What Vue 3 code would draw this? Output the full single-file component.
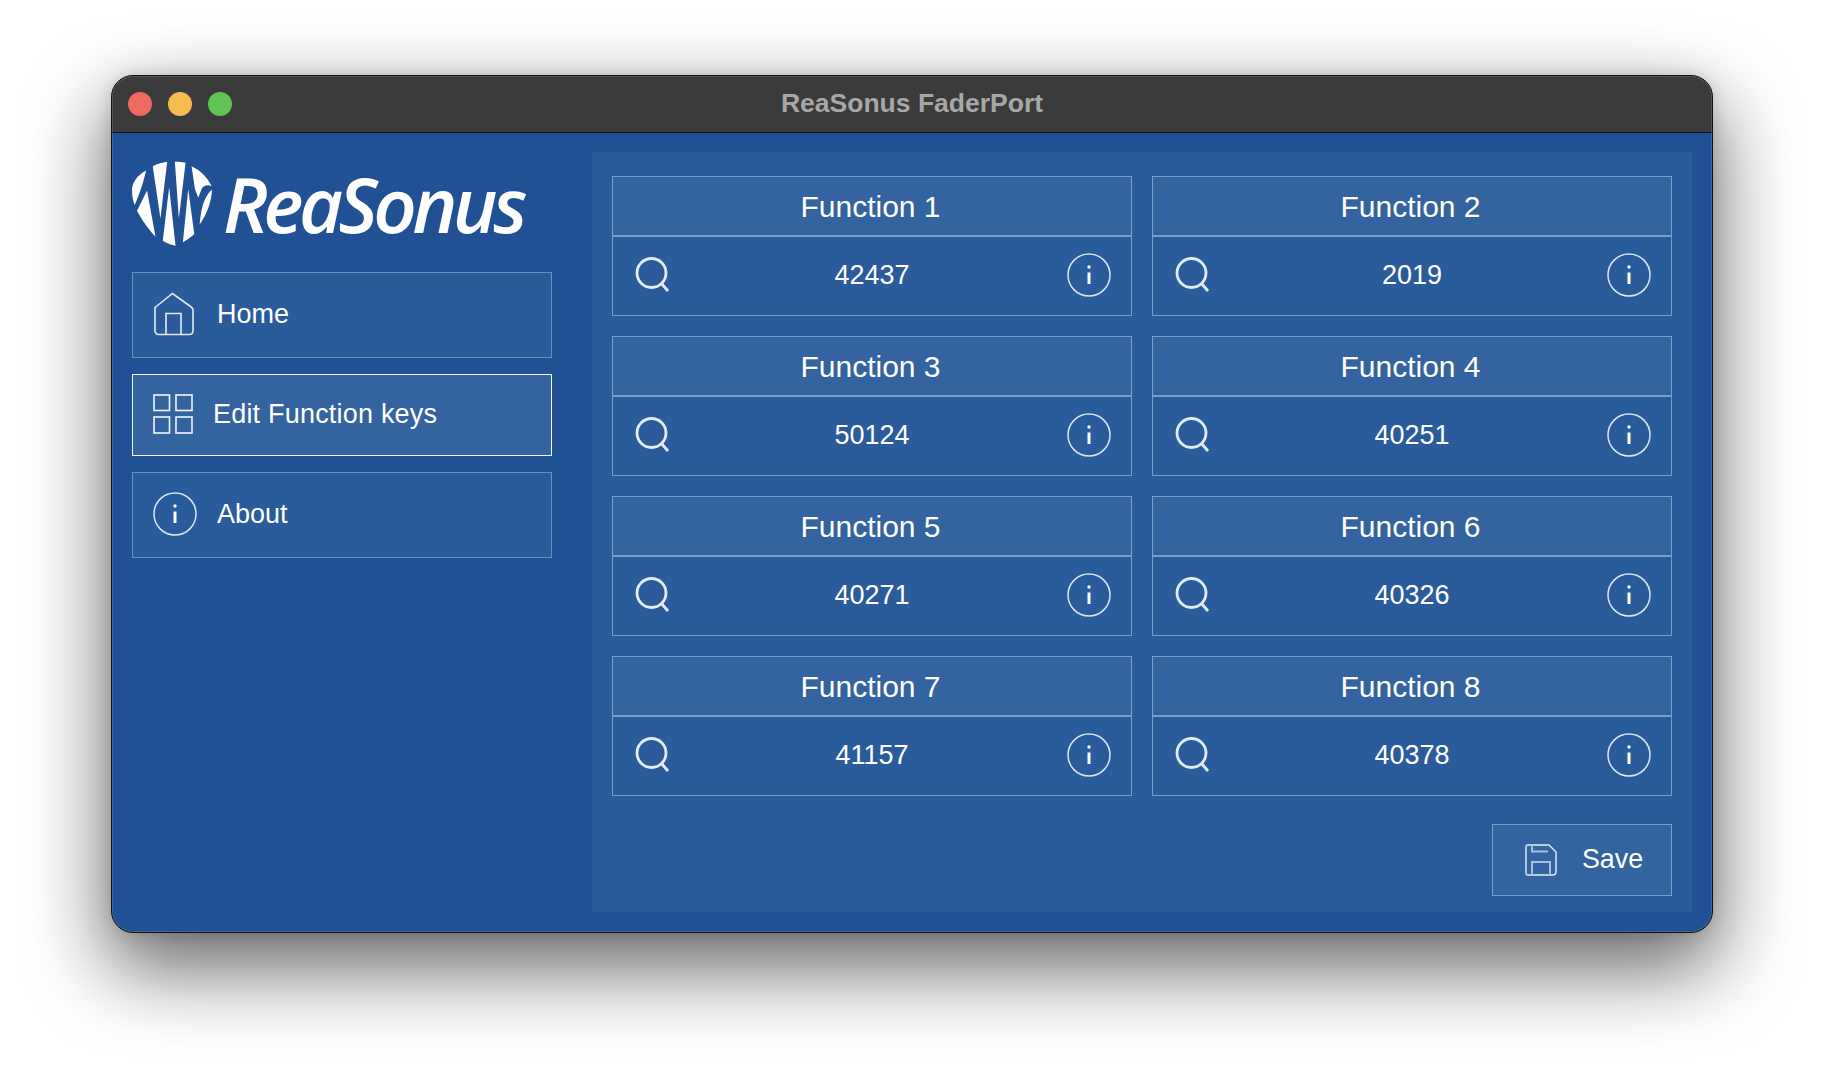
<script setup>
const functions = [
  { id: 1, value: '42437' },
  { id: 2, value: '2019' },
  { id: 3, value: '50124' },
  { id: 4, value: '40251' },
  { id: 5, value: '40271' },
  { id: 6, value: '40326' },
  { id: 7, value: '41157' },
  { id: 8, value: '40378' },
];
</script>

<template>
  <div class="page">
    <div class="window">
      <header class="titlebar">
        <div class="lights">
          <span class="light red"></span>
          <span class="light yellow"></span>
          <span class="light green"></span>
        </div>
        <div class="title">ReaSonus FaderPort</div>
      </header>

      <div class="body">
        <aside class="sidebar">
          <div class="logo">
            <svg class="logo-mark" viewBox="20 17 242 256" fill="#fff">
              <path d="M62 45C38 58 22 78 20 100C20 120 23 135 28 148C38 125 52 90 62 45Z" />
              <path d="M65 105L35 165C48 190 68 220 90 242Z" />
              <path d="M82 32C96 25 112 21 125 19L105 188Z" />
              <path d="M131 95L112 255C124 263 138 268 150 270Z" />
              <path d="M148 19C160 19 170 20 180 22L160 188Z" />
              <path d="M188 100L172 260C184 253 195 245 206 235Z" />
              <path d="M198 32C224 44 246 66 258 92C245 86 234 90 228 100L218 126L208 100Z" />
              <path d="M259 102C258 135 244 178 222 206C226 170 230 128 259 102Z" />
            </svg>
            <span class="logo-text">ReaSonus</span>
          </div>

          <nav class="nav">
            <button class="nav-btn">
              <svg class="icon-44" viewBox="0 0 44 44" fill="none" stroke="#e4ebf4" stroke-width="1.6">
                <path d="M2 15.500L19.500 1.500L37.500 14.500C39.200 15.700 40 16.500 40 18V38.500C40 41 38.500 42.500 36 42.500H6C3.500 42.500 2 41 2 38.500Z" />
                <path d="M13 42.500V21.500H28V42.500" />
              </svg>
              <span>Home</span>
            </button>
            <button class="nav-btn active">
              <svg class="icon-40" viewBox="0 0 40 40" fill="none" stroke="#f2f5fa" stroke-width="1.6">
                <rect x="1" y="1" width="15.500" height="15.500" />
                <rect x="23" y="1" width="16" height="15.500" />
                <rect x="1" y="23" width="15.500" height="16" />
                <rect x="23" y="23" width="16" height="16" />
              </svg>
              <span>Edit Function keys</span>
            </button>
            <button class="nav-btn">
              <svg class="icon-44" viewBox="0 0 44 44" fill="none" stroke="#dfe7f1" stroke-width="1.5">
                <circle cx="22" cy="22" r="21" />
                <path d="M22 19.500V31" stroke="#fff" stroke-width="3" />
                <circle cx="22" cy="14" r="1.700" fill="#fff" stroke="none" />
              </svg>
              <span>About</span>
            </button>
          </nav>
        </aside>

        <main class="panel">
          <div class="grid">
            <section v-for="fn in functions" :key="fn.id" class="card">
              <h2 class="card-title">Function {{ fn.id }}</h2>
              <div class="card-row">
                <svg class="icon-44" viewBox="0 0 44 44" fill="none" stroke="#e4ebf4">
                  <circle cx="18.500" cy="20" r="14.500" stroke-width="2.800" />
                  <path d="M28.500 30.500L35 38" stroke-width="2.800" />
                </svg>
                <span class="value">{{ fn.value }}</span>
                <svg class="icon-44" viewBox="0 0 44 44" fill="none" stroke="#dfe7f1" stroke-width="1.5">
                  <circle cx="22" cy="22" r="21" />
                  <path d="M22 19.500V31" stroke="#fff" stroke-width="3" />
                  <circle cx="22" cy="14" r="1.700" fill="#fff" stroke="none" />
                </svg>
              </div>
            </section>
          </div>

          <div class="actions">
            <button class="save-btn">
              <svg class="icon-32" viewBox="0 0 32 32" fill="none" stroke="#e4ebf4" stroke-width="1.400">
                <path d="M3 1H24L31 8V28C31 30 30 31 28 31H3C1.500 31 1 30 1 28.500V3.500C1 2 1.500 1 3 1Z" />
                <path d="M7 1V7.500H23" stroke="#a9c0dc" stroke-width="2" />
                <path d="M7 31V18H25V31" stroke="#a9c0dc" stroke-width="2" />
              </svg>
              <span>Save</span>
            </button>
          </div>
        </main>
      </div>
    </div>
  </div>
</template>

<style>
html,
body {
  margin: 0;
  background: #fff;
}
</style>

<style scoped>
.page {
  width: 1824px;
  height: 1080px;
  padding: 75px 0 0 111px;
  box-sizing: border-box;
  overflow: hidden;
  font-family: 'Liberation Sans', Arial, sans-serif;
  color: #fff;
}

.window {
  width: 1602px;
  height: 858px;
  box-sizing: border-box;
  border: 1px solid #111;
  border-radius: 22px;
  overflow: hidden;
  background: #215195;
  box-shadow: 0 32px 80px 4px rgba(0, 0, 0, 0.6), 0 0 16px rgba(0, 0, 0, 0.14);
  display: flex;
  flex-direction: column;
  position: relative;
}

/* thin light rim round the whole window */
.window::after {
  content: '';
  position: absolute;
  inset: 0;
  border-radius: 21px;
  box-shadow: inset 0 0 0 1px rgba(255, 255, 255, 0.14);
  pointer-events: none;
}

.titlebar {
  height: 56px;
  flex-shrink: 0;
  background: #3a3b3a;
  border-bottom: 1px solid #0c0c0c;
  display: flex;
  align-items: center;
  justify-content: center;
  position: relative;
}

.lights {
  position: absolute;
  left: 16px;
  top: 16px;
  display: flex;
  gap: 16px;
}

.light {
  width: 24px;
  height: 24px;
  border-radius: 50%;
}

.red {
  background: #ee6a5f;
}

.yellow {
  background: #f5bd4f;
}

.green {
  background: #61c454;
}

.title {
  font-size: 26.500px;
  font-weight: 700;
  color: #a6a7a6;
  padding-bottom: 2px;
}

.body {
  flex: 1;
  display: flex;
  padding: 19px 20px 20px;
  gap: 40px;
  min-height: 0;
}

.sidebar {
  width: 420px;
  flex-shrink: 0;
}

.logo {
  height: 120px;
  display: flex;
  align-items: flex-start;
  gap: 10px;
  padding-top: 9px;
  box-sizing: border-box;
}

.logo-mark {
  width: 81px;
  height: 86px;
  flex-shrink: 0;
}

.logo-text {
  font-family: 'Open Sans', sans-serif;
  font-style: italic;
  font-weight: 600;
  font-size: 76px;
  line-height: 86px;
  letter-spacing: -4.500px;
  color: #fff;
}

.nav {
  display: flex;
  flex-direction: column;
  gap: 16px;
}

button {
  font-family: inherit;
  color: #fff;
  cursor: pointer;
}

.nav-btn {
  height: 86px;
  box-sizing: border-box;
  background: #2a5b9b;
  border: 1px solid #6e8fbb;
  display: flex;
  align-items: center;
  gap: 20px;
  padding: 0 0 2px 20px;
  font-size: 27px;
}

.nav-btn.active {
  height: 82px;
  background: #33649f;
  border: 1.500px solid #f4f6fa;
  letter-spacing: 0.2px;
}

.icon-44 {
  width: 44px;
  height: 44px;
  flex-shrink: 0;
}

.icon-40 {
  width: 40px;
  height: 40px;
  flex-shrink: 0;
}

.icon-32 {
  width: 32px;
  height: 32px;
  flex-shrink: 0;
}

.panel {
  width: 1100px;
  height: 760px;
  box-sizing: border-box;
  background: #2a5b9b;
  padding: 24px 20px 16px;
  display: flex;
  flex-direction: column;
}

.grid {
  display: grid;
  grid-template-columns: 520px 520px;
  gap: 20px;
}

.card {
  height: 140px;
  box-sizing: border-box;
  border: 1px solid #7d9bc3;
  display: flex;
  flex-direction: column;
}

.card-title {
  margin: 0;
  height: 60px;
  box-sizing: border-box;
  background: #33649f;
  border-bottom: 2px solid #7d9bc3;
  font-size: 30px;
  font-weight: 400;
  line-height: 60px;
  text-align: center;
  padding-right: 3px;
}

.card-row {
  flex: 1;
  display: flex;
  align-items: center;
  justify-content: space-between;
  padding: 0 20px 2px;
}

.value {
  font-size: 27px;
}

.actions {
  margin-top: auto;
  display: flex;
  justify-content: flex-end;
}

.save-btn {
  width: 180px;
  height: 72px;
  box-sizing: border-box;
  background: #33649f;
  border: 1px solid #7d9bc3;
  display: flex;
  align-items: center;
  justify-content: center;
  gap: 25px;
  padding: 0 0 1px 4px;
  font-size: 26.800px;
}
</style>
